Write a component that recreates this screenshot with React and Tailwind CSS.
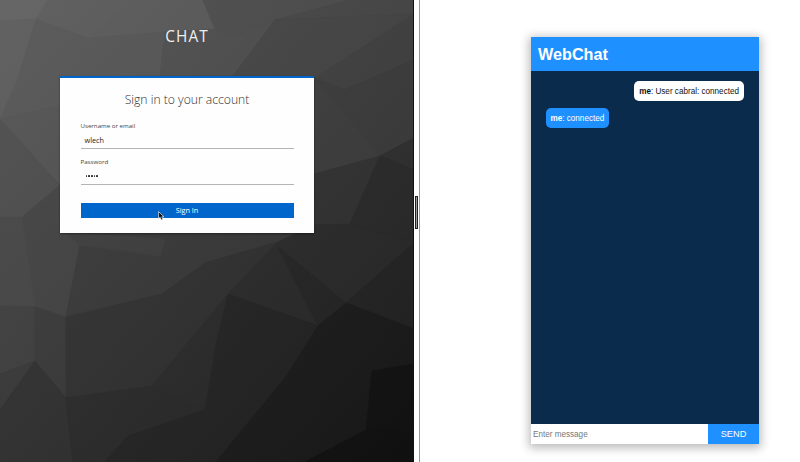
const facets = [
  ['0,0 48,0 36,19 0,21', '#676767'],
  ['0,21 36,19 16,84 0,119', '#616161'],
  ['36,19 48,0 134,0 88,38', '#606060'],
  ['36,19 88,38 60,106 0,119 16,84', '#5a5a5a'],
  ['88,38 134,0 203,0 215,29 165,32', '#5f5f5f'],
  ['203,0 350,0 275,20 233,38 215,29', '#505050'],
  ['88,38 165,32 160,76 60,106', '#5a5a5a'],
  ['165,32 215,29 233,38 275,20 233,76 160,76', '#525252'],
  ['275,20 350,0 414,0 414,14', '#4a4a4a'],
  ['275,20 414,14 318,78 233,76', '#484848'],
  ['414,14 414,60 345,90 314,78 318,76', '#434343'],
  ['0,119 60,106 60,185 46,170', '#575757'],
  ['0,119 46,170 60,185 22,217 0,217', '#505050'],
  ['22,217 60,185 80,245 66,317 35,307', '#454545'],
  ['0,217 22,217 35,307 0,306', '#494949'],
  ['314,78 345,90 414,60 414,138 380,156', '#3e3e3e'],
  ['314,78 380,156 314,174', '#404040'],
  ['380,156 414,138 414,170', '#303030'],
  ['314,174 380,156 350,224 314,240', '#333333'],
  ['380,156 414,170 414,243 350,224', '#2a2a2a'],
  ['60,225 314,225 314,240 278,242 205,263 162,294 66,317 80,245', '#3a3a3a'],
  ['66,233 165,239 160,256 80,245', '#404040'],
  ['0,306 35,307 35,361 0,374', '#414141'],
  ['35,307 66,317 66,398 35,361', '#3b3b3b'],
  ['0,374 35,361 0,410', '#3a3a3a'],
  ['35,361 66,398 73,462 0,462 0,410', '#303030'],
  ['66,317 162,294 205,263 278,242 228,294 152,386 66,398', '#313131'],
  ['278,242 314,225 350,224 414,243 346,303 318,326 228,294', '#2b2b2b'],
  ['278,247 300,265 346,303 318,326', '#252525'],
  ['346,303 414,243 414,329', '#242424'],
  ['66,398 152,386 205,410 128,436 105,462 73,462', '#2a2a2a'],
  ['152,386 228,294 216,345 205,410', '#2b2b2b'],
  ['228,294 318,326 285,378 216,462 105,462 128,436 205,410 216,345', '#232323'],
  ['318,326 346,303 414,329 414,364 372,371 366,430 305,462 216,462 285,378', '#1a1a1a'],
  ['372,371 414,364 414,436 366,430', '#111111'],
  ['366,430 414,433 414,462 305,462', '#101010'],
];

function FacetBackdrop() {
  return (
    <svg className="col-start-1 row-start-1 h-full w-full" viewBox="0 0 413 462" preserveAspectRatio="none" aria-hidden="true">
      <defs>
        <linearGradient id="base" x1="0" y1="0" x2="1" y2="1">
          <stop offset="0" stopColor="#656565" />
          <stop offset=".5" stopColor="#3b3b3b" />
          <stop offset="1" stopColor="#101010" />
        </linearGradient>
      </defs>
      <rect width="413" height="462" fill="url(#base)" />
      {facets.map(([points, fill]) => (
        <polygon key={points} points={points} fill={fill} stroke={fill} strokeWidth=".8" />
      ))}
      <rect width="413" height="462" fill="url(#base)" opacity=".25" />
    </svg>
  );
}

function Field({ label, children }) {
  return (
    <div className="h-[36px]">
      <div className="h-[9px] text-[6.15px] leading-[9px] text-[#444]">{label}</div>
      <div className="flex h-[19px] items-center border-b border-[#b4b4b4] pt-[2px] pl-[4px] text-[7.3px] text-[#222]">{children}</div>
    </div>
  );
}

function Login() {
  return (
    <section className="grid h-full w-[413px] shrink-0 overflow-hidden font-['Open_Sans',sans-serif]">
      <FacetBackdrop />
      <div className="z-10 col-start-1 row-start-1 pt-[26px]">
        <h1 className="ml-[60px] w-[254px] text-center text-[15.4px] leading-[22px] tracking-[1.1px] text-[#f0f0f0]">CHAT</h1>
        <div className="relative mt-[28px] ml-[60px] h-[157px] w-[254px] border-t-2 border-[#0066cc] bg-[#fefefe] px-[20.5px] pt-[13px] shadow-[0_1px_2px_rgba(0,0,0,0.4)]">
          <h2 className="mb-[13px] text-center text-[12.15px] leading-[17px] font-light text-[#303030]">Sign in to your account</h2>
          <Field label="Username or email">wlech</Field>
          <Field label="Password">
            <span className="flex gap-[1px] pl-[1px]">
              {[0, 1, 2, 3, 4].map((n) => <i key={n} className="h-[2px] w-[1.7px] rounded-[0.5px] bg-[#333]" />)}
            </span>
          </Field>
          <button className="mt-[10px] block h-[15px] w-full bg-[#0066cc] text-center text-[7.3px] leading-[15px] text-white">Sign In</button>
          <svg className="absolute top-[133px] left-[98px] h-[10px] w-[7px]" viewBox="0 0 7 10" aria-hidden="true">
            <path d="M.6 .6V7.6L2.2 6.3L3.3 9L4.9 8.3L3.8 5.8H6Z" fill="#111" stroke="#eee" strokeWidth=".7" />
          </svg>
        </div>
      </div>
    </section>
  );
}

function Divider() {
  return (
    <div className="flex h-full w-[7px] shrink-0 items-start border-r border-l border-r-[#999] border-l-[#111] bg-white pt-[196px] pl-[1px]">
      <div className="h-[33px] w-[3px] border border-[#222] bg-[#999]" />
    </div>
  );
}

function WebChat() {
  return (
    <section className="flex-1 pt-[37px] pl-[110.5px] font-['Liberation_Sans',Arial,sans-serif]">
      <div className="flex h-[407px] w-[228.5px] flex-col bg-[#0b2b4c] shadow-[0_2px_9px_2px_rgba(0,0,0,0.27)]">
        <header className="h-[34px] bg-[#1e90ff] pl-[7.5px] text-[16.2px] leading-[34px] font-bold text-white">WebChat</header>
        <div className="flex flex-1 flex-col gap-[7px] px-[15px] pt-[10px] text-[8.15px]">
          <div className="h-[20px] self-end rounded-[5px] bg-white px-[5px] leading-[21px] whitespace-nowrap text-[#111]"><b>me</b>: User cabral: connected</div>
          <div className="h-[20px] self-start rounded-[5px] bg-[#1e90ff] px-[5px] leading-[21px] whitespace-nowrap text-white"><b>me</b>: connected</div>
        </div>
        <footer className="flex h-[20px]">
          <div className="flex-1 bg-white pl-[2.5px] text-[8.15px] leading-[21px] text-[#777]">Enter message</div>
          <button className="w-[51px] bg-[#1e90ff] text-[9.2px] leading-[20px] text-white">SEND</button>
        </footer>
      </div>
    </section>
  );
}

export default function App() {
  return (
    <main className="flex h-[462px] w-[800px] overflow-hidden bg-white">
      <Login />
      <Divider />
      <WebChat />
    </main>
  );
}
